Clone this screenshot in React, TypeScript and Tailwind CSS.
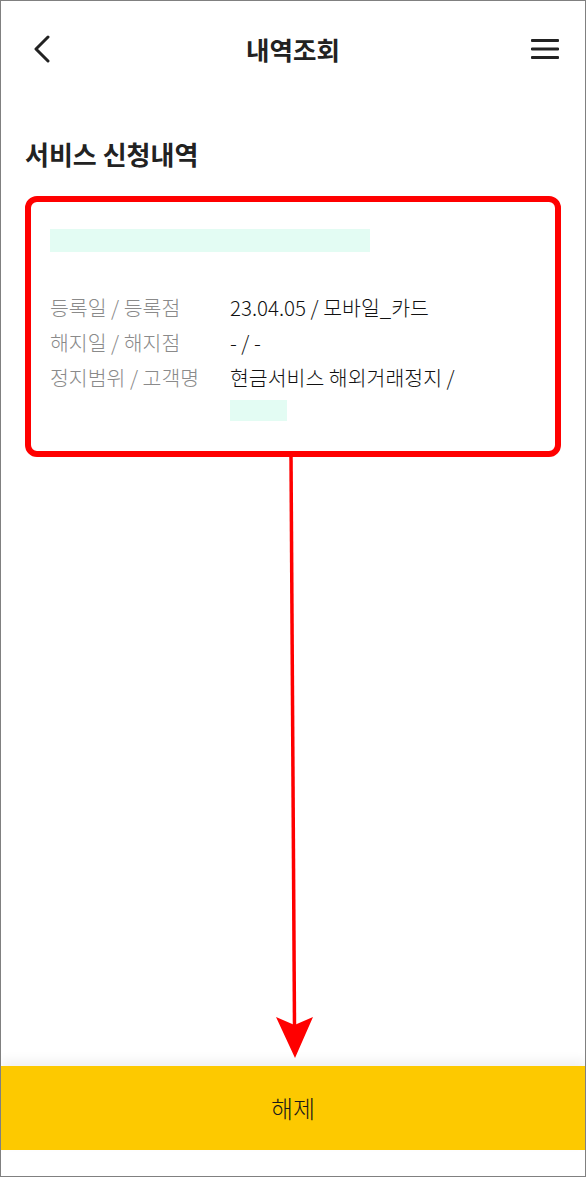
import React from 'react';

const rows: { label: string; value: React.ReactNode }[] = [
  { label: '등록일 / 등록점', value: '23.04.05 / 모바일_카드' },
  { label: '해지일 / 해지점', value: '- / -' },
  {
    label: '정지범위 / 고객명',
    value: (
      <>
        <span>현금서비스 해외거래정지 /</span>
        <span className="block w-[57px] h-[21px] mt-[5px] mb-[9px] bg-[#e3fcf3]" />
      </>
    ),
  },
];

export default function App() {
  return (
    <div
      className="relative w-[586px] h-[1177px] bg-white border border-[#808080] flex flex-col overflow-hidden"
      style={{ fontFamily: '"Noto Sans CJK KR", "Noto Sans", sans-serif' }}
    >
      {/* Header */}
      <header className="h-[96px] flex items-center justify-between pl-[32px] pr-[26px] relative">
        <svg width="18" height="28" viewBox="0 0 18 28" fill="none">
          <path d="M15 2 L3 14 L15 26" stroke="#222" strokeWidth="3" strokeLinecap="round" strokeLinejoin="round" />
        </svg>
        <h1 className="absolute left-0 right-0 text-center text-[25.5px] leading-[32px] font-bold text-[#222] pointer-events-none">
          내역조회
        </h1>
        <svg width="28" height="22" viewBox="0 0 28 22" fill="none">
          <path d="M1 2.5 H27 M1 11 H27 M1 19.5 H27" stroke="#222" strokeWidth="2.8" strokeLinecap="round" />
        </svg>
      </header>

      {/* Content */}
      <main className="flex-1 px-[24px]">
        <h2 className="mt-[41px] text-[26px] leading-[32px] font-bold text-[#222]">서비스 신청내역</h2>

        <div className="mt-[26px] w-[536px] border-[6px] border-[#ff0000] rounded-[12px] pt-[27px] pl-[19px] pr-[19px] pb-[21px]">
          <div className="w-[320px] h-[23px] bg-[#e3fcf3]" />
          <div className="mt-[38px]">
            {rows.map((r) => (
              <div key={r.label} className="flex text-[20.5px] leading-[35px] font-light">
                <span className="w-[180px] shrink-0 text-[#8a8a8a]">{r.label}</span>
                <div className="text-[#111]">{r.value}</div>
              </div>
            ))}
          </div>
        </div>
      </main>

      {/* Bottom button */}
      <div className="pb-[26px]">
        <button className="w-full h-[84px] bg-[#fdc900] text-[24px] font-light text-[#1a1a1a] shadow-[0_-6px_10px_rgba(0,0,0,0.06)]">
          해제
        </button>
      </div>

      {/* Annotation arrow */}
      <svg
        className="absolute -top-px -left-px pointer-events-none"
        width="586"
        height="1177"
        viewBox="0 0 586 1177"
      >
        <line x1="291" y1="455" x2="294.5" y2="1026" stroke="#ff0000" strokeWidth="3.5" />
        <polygon points="276,1017 294.5,1025 313,1017 295,1058" fill="#ff0000" />
      </svg>
    </div>
  );
}
